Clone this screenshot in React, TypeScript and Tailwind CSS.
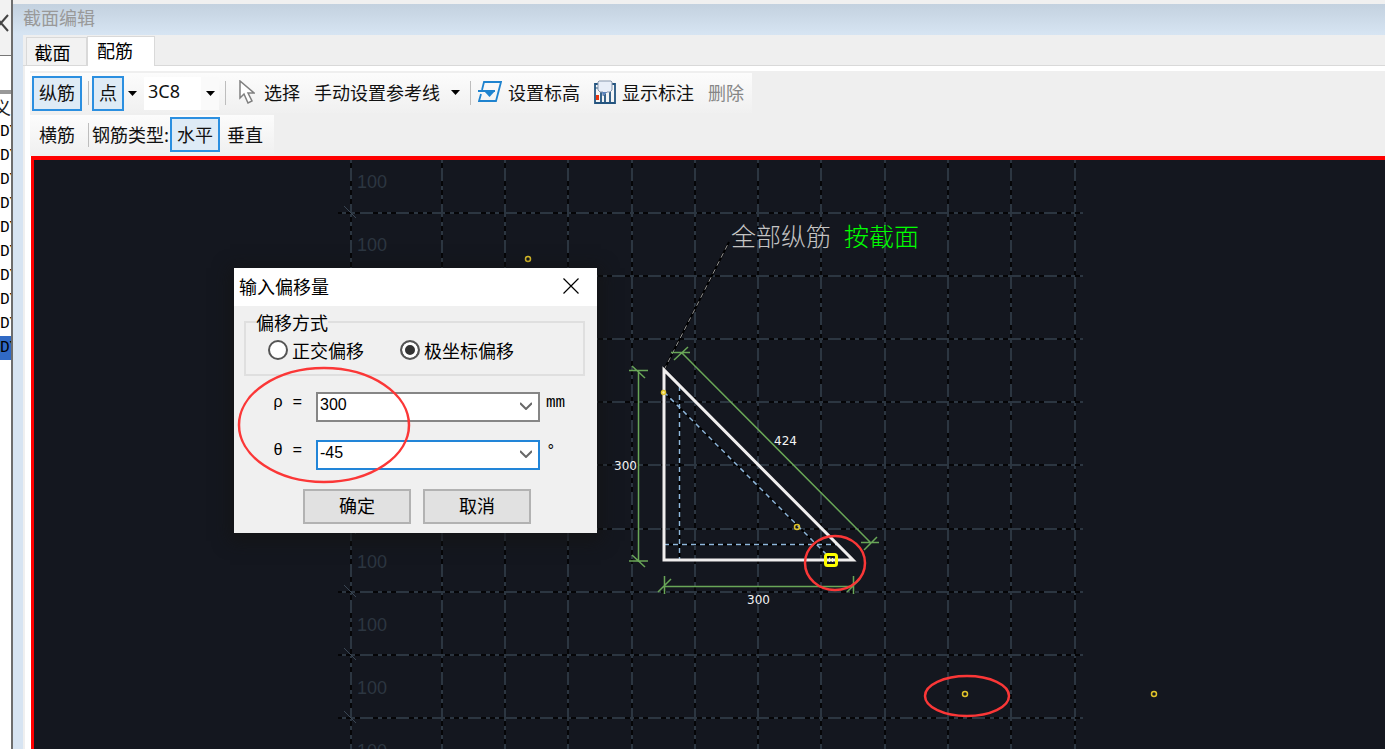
import React from 'react';

const VERTICALS = [351, 442, 505, 568, 632, 695, 758, 821, 885, 948, 1011, 1075];
const HORIZONTALS = [213, 276, 339, 402, 465, 529, 592, 655, 718];
const LABELS = [188, 251, 568, 631, 694, 757];
const POINTS = [[528, 259], [797, 527], [965, 694], [1154, 694]];

const Caret = () => (
  <svg className="w-[9px] h-[5px] shrink-0" viewBox="0 0 9 5" aria-hidden="true">
    <path d="M0 0h9L4.5 5z" fill="#000" />
  </svg>
);

const Separator = ({ className }: { className: string }) => (
  <span className={`w-px h-6 shrink-0 bg-[#bdbdbd] ${className}`} />
);

const ToolButton = ({ active, disabled, children }: {
  active?: boolean;
  disabled?: boolean;
  children: React.ReactNode;
}) => (
  <button
    type="button"
    disabled={disabled}
    className={`h-[35px] shrink-0 px-[5px] pb-0.5 border-2 flex items-center gap-1.5 whitespace-nowrap disabled:text-[#868686] ${active ? 'border-[#2b8fe0] bg-[#deebf6]' : 'border-transparent'}`}
  >
    {children}
  </button>
);

const CursorIcon = () => (
  <svg className="w-4 h-6 mr-[3px]" viewBox="0 0 16 24" fill="#fff" stroke="#808080" strokeWidth="1.5" aria-hidden="true">
    <path d="M1 1v17l4-4 4 9 4-2-4-8h6z" />
  </svg>
);

const LevelIcon = () => (
  <svg className="w-6 h-6" viewBox="0 0 24 24" fill="none" stroke="#1f83cf" strokeWidth="1.8" aria-hidden="true">
    <path d="M4 10L6 2h17l-5 19H1l2-7M0 11h17" />
    <path d="M6 11h11l-5.5 6z" fill="#1f83cf" stroke="none" />
  </svg>
);

const AnnotationIcon = () => (
  <svg className="w-[22px] h-6" viewBox="0 0 22 24" fill="none" aria-hidden="true">
    <path d="M5 4H1v19h20V4h-4M7 11v12M11 14v9M16 11v12" stroke="#24547f" strokeWidth="1.8" />
    <path d="M1 8h4" stroke="#24547f" />
    <rect x="2" y="15" width="3" height="5" fill="#e8330c" />
    <path d="M5 1h12l1 1v8l-2 2h-3l-4 4v-4H6l-2-2V2z" fill="#e8eef8" stroke="#8797ad" />
    <path d="M8 12h5l-4 4z" fill="#5c83bd" />
  </svg>
);

const LeftStrip = () => (
  <aside className="w-[13px] shrink-0 overflow-hidden bg-white border-r-2 border-[#6d6d6d] flex flex-col">
    <div className="h-14 shrink-0 bg-[#f2f2f2] border-b border-[#777] flex items-center justify-end pb-2.5">
      <svg className="w-4 h-[18px] shrink-0 mr-0.5" viewBox="0 0 16 18" stroke="#444" strokeWidth="2" aria-hidden="true">
        <path d="M1 1l14 16M15 1L1 17" />
      </svg>
    </div>
    <div className="h-[38px] shrink-0 border-b-4 border-[#999]" />
    <div className="h-[26px] shrink-0 flex items-center justify-end text-lg text-[#222]">义</div>
    {Array.from({ length: 10 }, (_, index) => (
      <div
        key={index}
        className={`h-6 shrink-0 font-['Liberation_Mono',monospace] text-base leading-6 text-black ${index === 9 ? 'bg-[#316ac5]' : ''}`}
      >
        DY
      </div>
    ))}
  </aside>
);

const Drawing = () => (
  <svg className="block w-full h-full" aria-label="截面">
    <g transform="translate(-34 -160)" fill="none">
      <g strokeWidth="2">
        {VERTICALS.map((x) => (
          <g key={x}>
            <path d={`M${x} 160V760`} stroke="#050507" />
            <path d={`M${x} 160V760`} stroke="#2c3641" strokeDasharray="13 5 4 5 4 5" strokeDashoffset="28" />
          </g>
        ))}
        {HORIZONTALS.map((y) => (
          <g key={y}>
            <path d={`M338 ${y}H1083`} stroke="#050507" />
            <path d={`M338 ${y}H1083`} stroke="#2c3641" strokeDasharray="13 5 4 5 4 5" strokeDashoffset="14" />
            <path d={`M344 ${y - 7}l12 12`} stroke="#3a4653" strokeWidth="1" />
          </g>
        ))}
      </g>
      <g className="font-['Liberation_Sans',sans-serif] text-lg" fill="#2c3641">
        {LABELS.map((y) => <text key={y} x="357" y={y}>100</text>)}
      </g>

      <path d="M664 370L729 242" stroke="#000" strokeWidth="2" />
      <path d="M664 370L729 242" stroke="#999" strokeDasharray="5 4" />
      <g className="text-[25px] font-light">
        <text x="731" y="246" fill="#c4c4c4">全部纵筋</text>
        <text x="844" y="246" fill="#00ff00">按截面</text>
      </g>

      <path d="M664 392L830 558M679.5 386V560M664 544.5H838" stroke="#000" strokeWidth="2" />
      <path d="M664 392L830 558M679.5 386V560M664 544.5H838" stroke="#8fb7dc" strokeWidth="1.5" strokeDasharray="5 4" />
      <path d="M664 370V560H853Z" stroke="#f0eeee" strokeWidth="3" />

      <g stroke="#69a657" strokeWidth="1.5">
        <path d="M638.5 370V562M629 370.5H648M632 366l13 12M629 561H648M632 555l13 12" />
        <path d="M664 586.5H853M664.5 576V594M658 592l13-13M853.5 576V594M847 592l13-13" />
        <path d="M682 353L871 543M671 352.5H690M674 360l14-13M861 542.5H879M864 550l13-13" />
      </g>
      <g className="font-['DejaVu_Sans',sans-serif] text-xs" fill="#f4f4f4">
        <text x="614" y="470">300</text>
        <text x="747" y="604">300</text>
        <text x="774" y="445">424</text>
      </g>

      <g stroke="#e0c32a" strokeWidth="1.5">
        {POINTS.map(([x, y]) => <circle key={x} cx={x} cy={y} r="2.5" />)}
        <circle cx="663.5" cy="392.5" r="2" fill="#fff3a0" />
      </g>
      <rect x="825.5" y="554.5" width="11" height="11" rx="2" stroke="#ff0" strokeWidth="3" />
      <path d="M829 558l4 4M833 558l-4 4" stroke="#ffffb0" />
    </g>
  </svg>
);

const ComboRow = ({ id, label, value, unit, focused }: {
  id: string;
  label: string;
  value: string;
  unit: string;
  focused?: boolean;
}) => (
  <div className="h-[30px] flex items-center">
    <label htmlFor={id} className="w-[82px] pr-3.5 pb-1 text-right font-['Liberation_Mono',monospace] text-base">{label}</label>
    <div className="relative w-56 h-full">
      <select
        id={id}
        className={`appearance-none w-full h-full pl-0.5 pb-1 border-2 bg-white outline-none font-['Liberation_Sans',sans-serif] text-base leading-none ${focused ? 'border-[#2285d8]' : 'border-[#868686]'}`}
      >
        <option>{value}</option>
      </select>
      <svg className="absolute right-2 top-3 w-3 h-2 pointer-events-none" viewBox="0 0 12 8" fill="none" stroke="#686868" strokeWidth="2" aria-hidden="true">
        <path d="M0 1l6 6 6-6" />
      </svg>
    </div>
    <span className="pl-1.5 pb-1 font-['Liberation_Mono',monospace] text-base">{unit}</span>
  </div>
);

const Radio = ({ label, checked }: { label: string; checked?: boolean }) => (
  <label className="flex items-center gap-1">
    <input
      type="radio"
      name="offset-mode"
      defaultChecked={checked}
      className="appearance-none w-5 h-5 rounded-full border-2 border-[#555] bg-white checked:bg-[#333] checked:shadow-[inset_0_0_0_3px_white]"
    />
    {label}
  </label>
);

const OffsetDialog = () => (
  <form
    role="dialog"
    aria-label="输入偏移量"
    className="absolute left-[200px] top-[108px] w-[363px] bg-[#f0f0f0] text-lg leading-6 text-black shadow-[0_4px_16px_4px_rgba(20,20,20,0.8)]"
  >
    <header className="h-[38px] pl-[5px] pr-[18px] pb-0.5 bg-white flex items-center justify-between">
      <h2>输入偏移量</h2>
      <button type="button" aria-label="关闭">
        <svg className="w-4 h-4" viewBox="0 0 16 16" stroke="#000" strokeWidth="1.2" aria-hidden="true">
          <path d="M0.5 0.5l15 15M15.5 0.5l-15 15" />
        </svg>
      </button>
    </header>
    <fieldset className="ml-2.5 mr-3 mt-1 h-[66px] border-2 border-[#dfdfdf] px-[22px]">
      <legend className="-ml-3 leading-6">偏移方式</legend>
      <div className="flex gap-9 pt-1">
        <Radio label="正交偏移" />
        <Radio label="极坐标偏移" checked />
      </div>
    </fieldset>
    <div className="mt-3.5 flex flex-col gap-[18px]">
      <ComboRow id="rho" label="ρ =" value="300" unit="mm" />
      <ComboRow id="theta" label="θ =" value="-45" unit="°" focused />
    </div>
    <div className="flex justify-center gap-3 pt-[21px] pb-[9px] pl-[3px]">
      <button type="button" className="w-[108px] h-[35px] pb-1 bg-[#e1e1e1] border-2 border-[#b2b2b2]">确定</button>
      <button type="button" className="w-[108px] h-[35px] pb-1 bg-[#e1e1e1] border-2 border-[#b2b2b2]">取消</button>
    </div>
  </form>
);

const Toolbars = () => (
  <div className="h-[85px] shrink-0 ml-[5px] bg-[#efefef] flex flex-col items-start gap-0.5 pt-0.5 text-lg leading-6 text-[#111]">
    <div className="h-10 w-[722px] pl-0.5 flex items-center bg-linear-to-b from-[#fcfcfc] to-[#f0f0f0]">
      <ToolButton active>纵筋</ToolButton>
      <Separator className="ml-1.5 mr-[3px]" />
      <ToolButton active>点</ToolButton>
      <button type="button" aria-label="点" className="h-8 px-1 shrink-0"><Caret /></button>
      <div className="relative w-[75px] h-[33px] ml-[3px] shrink-0">
        <select aria-label="钢筋" className="appearance-none w-full h-full pl-1 pb-1 bg-white outline-none font-['Noto_Sans',sans-serif] text-lg leading-none">
          <option>3C8</option>
        </select>
        <span className="absolute right-0 top-0 w-[18px] h-full bg-[#fafafa] flex items-center justify-center pointer-events-none">
          <Caret />
        </span>
      </div>
      <Separator className="mx-1.5" />
      <ToolButton><CursorIcon />选择</ToolButton>
      <ToolButton>手动设置参考线<span className="pl-[5px]"><Caret /></span></ToolButton>
      <Separator className="ml-[3px]" />
      <ToolButton><LevelIcon />设置标高</ToolButton>
      <ToolButton><AnnotationIcon />显示标注</ToolButton>
      <ToolButton disabled>删除</ToolButton>
    </div>
    <div className="w-[244px] h-[39px] pl-0.5 flex items-center bg-linear-to-b from-[#fcfcfc] to-[#f0f0f0]">
      <ToolButton>横筋</ToolButton>
      <Separator className="ml-1.5 mr-[3px]" />
      <span className="w-[78px] pb-0.5 shrink-0 whitespace-nowrap">钢筋类型:</span>
      <ToolButton active>水平</ToolButton>
      <ToolButton>垂直</ToolButton>
    </div>
  </div>
);

const App = () => {
  return (
    <div className="h-screen flex overflow-hidden bg-white font-['Noto_Sans_CJK_SC',sans-serif]">
      <LeftStrip />
      <main className="flex-1 min-w-0 flex flex-col bg-[#d7e4f2]">
        <header className="h-[35px] shrink-0 pl-2.5 pb-[5px] border-t-4 border-[#f0f0f0] bg-linear-to-b from-[#c3d1df] to-[#d7e5f3] flex items-center text-lg leading-6 text-[#999]">
          <h1>截面编辑</h1>
        </header>
        <section className="flex-1 min-h-0 ml-2.5 flex flex-col bg-[#efefef]">
          <div role="tablist" className="h-[31px] shrink-0 pl-[3px] pt-px flex items-end border-b border-[#d9d9d9] text-lg leading-6 text-black">
            <button role="tab" type="button" aria-selected="false" className="w-[61px] h-7 pr-2 border border-b-0 border-[#d9d9d9] bg-[#f2f2f2]">截面</button>
            <button role="tab" type="button" aria-selected="true" className="w-[68px] h-[30px] -mb-px pr-3 pb-1 border border-b-0 border-[#d9d9d9] bg-white">配筋</button>
          </div>
          <div className="flex-1 min-h-0 ml-0.5 pt-[5px] flex flex-col bg-white">
            <Toolbars />
            <div className="relative flex-1 min-h-0 ml-1.5 overflow-hidden border-l-3 border-t-4 border-[#f00] bg-[#14171f]">
              <Drawing />
              <OffsetDialog />
              <svg className="absolute inset-0 w-full h-full pointer-events-none" fill="none" stroke="#fb3737" strokeWidth="2.5" aria-hidden="true">
                <ellipse cx="290" cy="265" rx="85" ry="57" />
                <ellipse cx="801" cy="403" rx="30" ry="27" />
                <ellipse cx="933" cy="536" rx="42" ry="20" />
              </svg>
            </div>
          </div>
        </section>
      </main>
    </div>
  );
};

export default App;
